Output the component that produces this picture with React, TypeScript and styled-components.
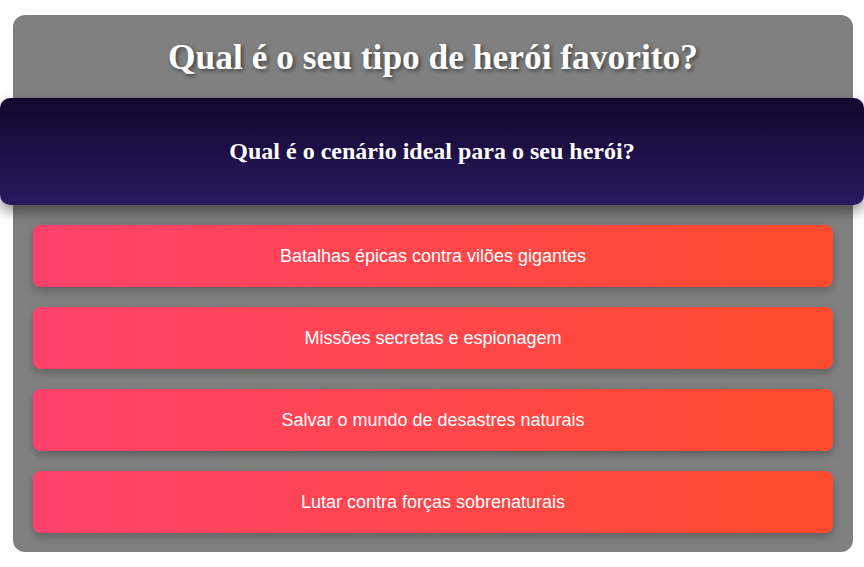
import React from "react";
import styled, { createGlobalStyle } from "styled-components";

const Global = createGlobalStyle`
  html, body { margin: 0; padding: 0; background: #ffffff; }
  body { font-family: "Liberation Sans", Arial, sans-serif; }
`;

const Page = styled.div`
  padding: 15px 11px 15px 13px;
`;

const Container = styled.div`
  background: #808080;
  border-radius: 12px;
  padding: 20px 20px 19px;
  display: flex;
  flex-direction: column;
`;

const Title = styled.h1`
  margin: 0;
  font-family: "Liberation Serif", "Times New Roman", serif;
  font-weight: bold;
  font-size: 35.4px;
  line-height: 44px;
  color: #ffffff;
  text-align: center;
  text-shadow: 2px 2px 4px rgba(0, 0, 0, 0.5);
`;

const QuestionCard = styled.div`
  margin: 19px -31px 20px -33px;
  height: 107px;
  border-radius: 10px;
  background: linear-gradient(to bottom, #12072e, #29195f);
  box-shadow: 0 6px 14px rgba(0, 0, 0, 0.45);
  display: flex;
  align-items: center;
  justify-content: center;
`;

const Question = styled.h2`
  margin: 0;
  font-family: "Liberation Serif", "Times New Roman", serif;
  font-weight: bold;
  font-size: 24px;
  color: #ffffff;
`;

const Options = styled.div`
  display: flex;
  flex-direction: column;
  gap: 20px;
`;

const Option = styled.button`
  height: 62px;
  border: none;
  border-radius: 8px;
  background: linear-gradient(to right, #ff416c, #ff4b2b);
  color: #ffffff;
  font-family: "Liberation Sans", Arial, sans-serif;
  font-size: 18px;
  box-shadow: 0 4px 8px rgba(0, 0, 0, 0.25);
  cursor: pointer;
  padding: 0;
`;

const options = [
  "Batalhas épicas contra vilões gigantes",
  "Missões secretas e espionagem",
  "Salvar o mundo de desastres naturais",
  "Lutar contra forças sobrenaturais",
];

export default function App() {
  return (
    <>
      <Global />
      <Page>
        <Container>
          <Title>Qual é o seu tipo de herói favorito?</Title>
          <QuestionCard>
            <Question>Qual é o cenário ideal para o seu herói?</Question>
          </QuestionCard>
          <Options>
            {options.map((o) => (
              <Option key={o}>{o}</Option>
            ))}
          </Options>
        </Container>
      </Page>
    </>
  );
}
